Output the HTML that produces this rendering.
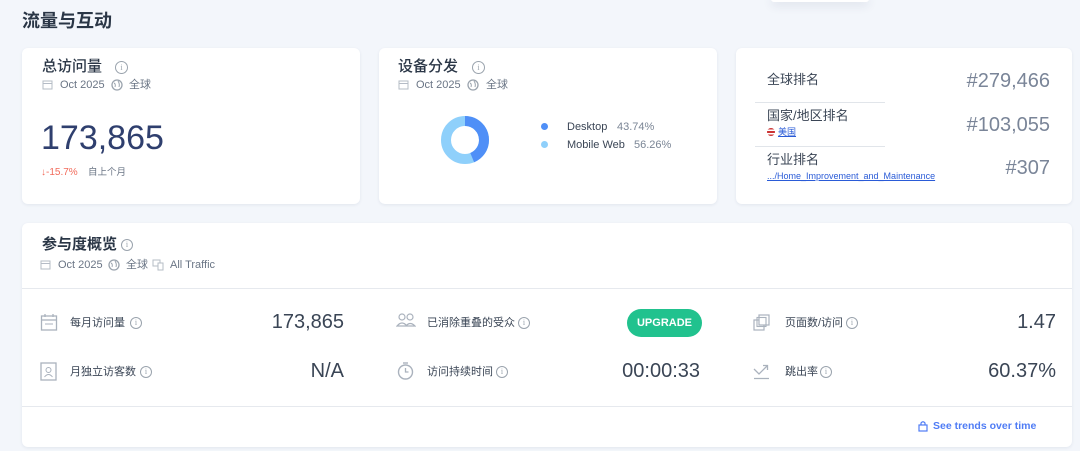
<!DOCTYPE html>
<html><head><meta charset="utf-8"><style>
*{margin:0;padding:0;box-sizing:border-box}
body{width:1080px;height:451px;background:#f3f6fb;font-family:"Liberation Sans","Noto Sans CJK SC",sans-serif;position:relative;overflow:hidden;color:#2a3646}
.a{position:absolute;white-space:nowrap;line-height:14px}
.card{position:absolute;background:#fff;border-radius:6px;box-shadow:0 1px 3px rgba(30,50,90,.08)}
.ttl{font-size:15px;color:#2a3646;font-weight:500;line-height:18px}
.sub{font-size:11px;color:#6a7585}
.info{display:inline-block;width:11px;height:11px;border:1px solid #9aa3ad;border-radius:50%;font-size:8px;line-height:9px;text-align:center;color:#9aa3ad;font-family:"Liberation Serif",serif;vertical-align:top}
.lbl{font-size:11px;color:#3a4555}
.val{font-size:20px;color:#3a4555;text-align:right;line-height:24px}
.rn{font-size:20px;color:#7a8598;text-align:right;line-height:24px}
.ic{position:absolute}
</style></head><body>
<div class="a" style="left:771px;top:-4px;width:98px;height:6px;background:#fff;border-radius:3px;box-shadow:0 3px 10px rgba(30,50,90,.12)"></div>
<div class="a" style="left:22px;top:10px;font-size:18px;font-weight:bold;color:#2a3646;line-height:22px">流量与互动</div>

<div class="card" style="left:22px;top:48px;width:338px;height:156px"></div>
<div class="a ttl" style="left:42px;top:58px">总访问量</div>
<div class="a" style="left:115px;top:61px"><span class="info" style="width:13px;height:13px;line-height:11px">i</span></div>
<svg class="ic" style="left:42px;top:79px" width="11" height="11"><rect x="1" y="2" width="9" height="8" fill="none" stroke="#b5bcc6"/><line x1="1" y1="4.5" x2="10" y2="4.5" stroke="#b5bcc6"/></svg>
<div class="a sub" style="left:60px;top:78px">Oct 2025</div>
<svg class="ic" style="left:111px;top:79px" width="12" height="12"><circle cx="6" cy="6" r="5" fill="none" stroke="#9aa3ad" stroke-width="1.3"/><path d="M3 4 Q5 5 4 8 M7 2 Q9 5 8 8" stroke="#9aa3ad" fill="none"/></svg>
<div class="a sub" style="left:129px;top:78px">全球</div>
<div class="a" style="left:41px;top:119px;font-size:34px;color:#2f3f6e;line-height:38px">173,865</div>
<div class="a" style="left:41px;top:166px;font-size:10px;color:#f26b5b">↓-15.7%</div>
<div class="a" style="left:88px;top:166px;font-size:9.5px;color:#6a7585">自上个月</div>

<div class="card" style="left:379px;top:48px;width:338px;height:156px"></div>
<div class="a ttl" style="left:398px;top:58px">设备分发</div>
<div class="a" style="left:472px;top:61px"><span class="info" style="width:13px;height:13px;line-height:11px">i</span></div>
<svg class="ic" style="left:398px;top:79px" width="11" height="11"><rect x="1" y="2" width="9" height="8" fill="none" stroke="#b5bcc6"/><line x1="1" y1="4.5" x2="10" y2="4.5" stroke="#b5bcc6"/></svg>
<div class="a sub" style="left:416px;top:78px">Oct 2025</div>
<svg class="ic" style="left:467px;top:79px" width="12" height="12"><circle cx="6" cy="6" r="5" fill="none" stroke="#9aa3ad" stroke-width="1.3"/><path d="M3 4 Q5 5 4 8 M7 2 Q9 5 8 8" stroke="#9aa3ad" fill="none"/></svg>
<div class="a sub" style="left:486px;top:78px">全球</div>
<svg class="ic" style="left:440px;top:115px" width="50" height="50"><circle cx="25" cy="25" r="19" fill="none" stroke="#8fd0fb" stroke-width="10"/><circle cx="25" cy="25" r="19" fill="none" stroke="#4f8ff7" stroke-width="10" stroke-dasharray="52.2 200" transform="rotate(-90 25 25)"/></svg>
<div class="a" style="left:541px;top:123px;width:7px;height:7px;border-radius:50%;background:#4f8ff7"></div>
<div class="a" style="left:541px;top:141px;width:7px;height:7px;border-radius:50%;background:#8fd0fb"></div>
<div class="a" style="left:567px;top:120px;font-size:11px;color:#3a4555">Desktop</div>
<div class="a" style="left:617px;top:120px;font-size:11px;color:#7a8595">43.74%</div>
<div class="a" style="left:567px;top:138px;font-size:11px;color:#3a4555">Mobile Web</div>
<div class="a" style="left:634px;top:138px;font-size:11px;color:#7a8595">56.26%</div>

<div class="card" style="left:736px;top:48px;width:336px;height:156px"></div>
<div class="a" style="left:767px;top:72px;font-size:13px;color:#3a4555;line-height:16px">全球排名</div>
<div class="a" style="left:755px;top:102px;width:130px;height:1px;background:#e1e5ea"></div>
<div class="a" style="left:767px;top:108px;font-size:13px;color:#3a4555;line-height:16px">国家/地区排名</div>
<div class="a" style="left:767px;top:125px;font-size:9px;color:#2a5bd7"><span style="display:inline-block;width:8px;height:8px;border-radius:50%;background:linear-gradient(#c33 0 20%,#fff 20% 40%,#c33 40% 60%,#fff 60% 80%,#c33 80%);vertical-align:-1px;margin-right:3px"></span><u>美国</u></div>
<div class="a" style="left:755px;top:146px;width:130px;height:1px;background:#e1e5ea"></div>
<div class="a" style="left:767px;top:152px;font-size:13px;color:#3a4555;line-height:16px">行业排名</div>
<div class="a" style="left:767px;top:169px;font-size:9px;color:#2a5bd7;text-decoration:underline">.../Home_Improvement_and_Maintenance</div>
<div class="a rn" style="right:30px;top:69px">#279,466</div>
<div class="a rn" style="right:30px;top:113px">#103,055</div>
<div class="a rn" style="right:30px;top:156px">#307</div>

<div class="card" style="left:22px;top:223px;width:1050px;height:224px"></div>
<div class="a" style="left:42px;top:236px;font-size:15px;font-weight:bold;color:#2a3646;line-height:18px">参与度概览</div>
<div class="a" style="left:121px;top:239px"><span class="info" style="width:12px;height:12px;line-height:10px">i</span></div>
<svg class="ic" style="left:40px;top:259px" width="11" height="11"><rect x="1" y="2" width="9" height="8" fill="none" stroke="#b5bcc6"/><line x1="1" y1="4.5" x2="10" y2="4.5" stroke="#b5bcc6"/></svg>
<div class="a sub" style="left:58px;top:258px">Oct 2025</div>
<svg class="ic" style="left:108px;top:259px" width="12" height="12"><circle cx="6" cy="6" r="5" fill="none" stroke="#9aa3ad" stroke-width="1.3"/><path d="M3 4 Q5 5 4 8 M7 2 Q9 5 8 8" stroke="#9aa3ad" fill="none"/></svg>
<div class="a sub" style="left:126px;top:258px">全球</div>
<svg class="ic" style="left:152px;top:259px" width="13" height="12"><rect x="1" y="1" width="7" height="6" fill="none" stroke="#b5bcc6"/><rect x="6" y="4" width="5" height="7" fill="#fff" stroke="#b5bcc6"/></svg>
<div class="a sub" style="left:170px;top:258px">All Traffic</div>
<div class="a" style="left:22px;top:288px;width:1050px;height:1px;background:#e6e9ee"></div>
<div class="a" style="left:22px;top:406px;width:1050px;height:1px;background:#e6e9ee"></div>

<svg class="ic" style="left:40px;top:313px" width="18" height="18"><rect x="1.5" y="3" width="15" height="14" fill="none" stroke="#aab2bd" stroke-width="1.3"/><line x1="1.5" y1="7" x2="16.5" y2="7" stroke="#aab2bd" stroke-width="1.3"/><line x1="5" y1="1" x2="5" y2="4" stroke="#aab2bd" stroke-width="1.3"/><line x1="13" y1="1" x2="13" y2="4" stroke="#aab2bd" stroke-width="1.3"/><line x1="5" y1="11" x2="13" y2="11" stroke="#aab2bd"/></svg>
<div class="a lbl" style="left:70px;top:316px">每月访问量</div>
<div class="a" style="left:130px;top:317px"><span class="info" style="width:12px;height:12px;line-height:10px">i</span></div>
<div class="a val" style="right:736px;top:310px">173,865</div>
<svg class="ic" style="left:40px;top:362px" width="17" height="19"><rect x="1" y="1" width="15" height="17" fill="none" stroke="#aab2bd" stroke-width="1.3"/><circle cx="8.5" cy="8" r="2.5" fill="none" stroke="#aab2bd"/><path d="M4.5 15 Q8.5 10 12.5 15" fill="none" stroke="#aab2bd"/></svg>
<div class="a lbl" style="left:70px;top:365px">月独立访客数</div>
<div class="a" style="left:140px;top:366px"><span class="info" style="width:12px;height:12px;line-height:10px">i</span></div>
<div class="a val" style="right:736px;top:359px">N/A</div>

<svg class="ic" style="left:396px;top:313px" width="20" height="16"><circle cx="6" cy="4" r="3" fill="none" stroke="#aab2bd" stroke-width="1.2"/><circle cx="14" cy="4" r="3" fill="none" stroke="#aab2bd" stroke-width="1.2"/><path d="M1 13 Q6 7 11 13 Z M10 13 Q14 8 19 13 Z" fill="none" stroke="#aab2bd" stroke-width="1.2"/></svg>
<div class="a lbl" style="left:427px;top:316px">已消除重叠的受众</div>
<div class="a" style="left:518px;top:317px"><span class="info" style="width:12px;height:12px;line-height:10px">i</span></div>
<div class="a" style="left:627px;top:309px;width:75px;height:28px;border-radius:14px;background:#21c28e;color:#fff;font-size:11px;font-weight:bold;text-align:center;line-height:28px">UPGRADE</div>
<svg class="ic" style="left:396px;top:361px" width="19" height="20"><circle cx="9.5" cy="11" r="7" fill="none" stroke="#aab2bd" stroke-width="1.4"/><path d="M9.5 7 V11 H12.5" fill="none" stroke="#aab2bd" stroke-width="1.3"/><line x1="7" y1="2" x2="12" y2="2" stroke="#aab2bd" stroke-width="1.4"/></svg>
<div class="a lbl" style="left:427px;top:365px">访问持续时间</div>
<div class="a" style="left:496px;top:366px"><span class="info" style="width:12px;height:12px;line-height:10px">i</span></div>
<div class="a val" style="right:380px;top:359px">00:00:33</div>

<svg class="ic" style="left:753px;top:314px" width="17" height="17"><rect x="1" y="6" width="10" height="10" fill="none" stroke="#aab2bd" stroke-width="1.2"/><rect x="6" y="1" width="10" height="10" fill="#fff" stroke="#aab2bd" stroke-width="1.2"/><rect x="4" y="3.5" width="9" height="9" fill="none" stroke="#aab2bd" stroke-width="1.1"/></svg>
<div class="a lbl" style="left:785px;top:316px">页面数/访问</div>
<div class="a" style="left:846px;top:317px"><span class="info" style="width:12px;height:12px;line-height:10px">i</span></div>
<div class="a val" style="right:24px;top:310px">1.47</div>
<svg class="ic" style="left:753px;top:363px" width="17" height="17"><path d="M1 6 L6 11 L14 3 M10 2.5 H14.5 V7 M1 15.5 H16" fill="none" stroke="#aab2bd" stroke-width="1.3"/></svg>
<div class="a lbl" style="left:785px;top:365px">跳出率</div>
<div class="a" style="left:820px;top:366px"><span class="info" style="width:12px;height:12px;line-height:10px">i</span></div>
<div class="a val" style="right:24px;top:359px">60.37%</div>

<svg class="ic" style="left:918px;top:420px" width="10" height="12"><rect x="1" y="5" width="8" height="6" fill="none" stroke="#4f7cf5" stroke-width="1.2"/><path d="M3 5 V3 Q5 0.5 7 3 V5" fill="none" stroke="#4f7cf5" stroke-width="1.2"/></svg>
<div class="a" style="left:933px;top:419px;font-size:10.5px;font-weight:bold;color:#4f7cf5">See trends over time</div>
</body></html>
